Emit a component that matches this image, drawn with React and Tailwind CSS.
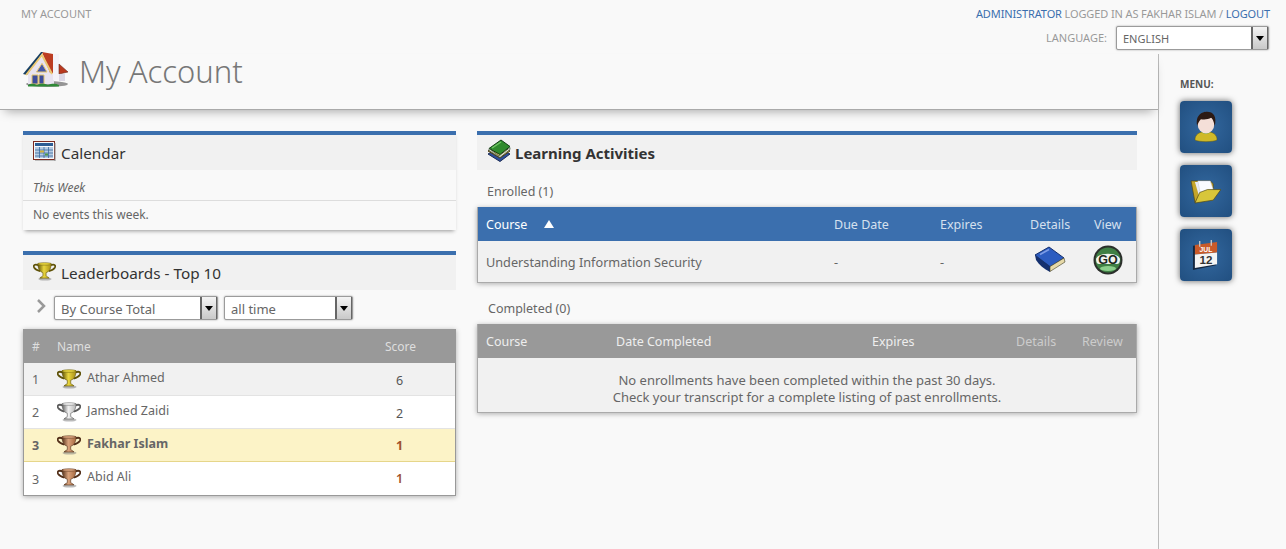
function Trophy({ id, light, mid, dark, className }) {
  return (
    <svg viewBox="0 0 24 20" className={className}>
      <defs>
        <linearGradient id={id} x1="0" y1="0" x2="1" y2="0">
          <stop offset="0" stopColor={dark} />
          <stop offset="0.45" stopColor={light} />
          <stop offset="1" stopColor={mid} />
        </linearGradient>
      </defs>
      <ellipse cx="12.5" cy="18" rx="7" ry="1.6" fill="#777" opacity="0.5" />
      <path d="M6 3.5C1 1.5 0 4 1.2 6c1.2 1.9 4 3 6.3 3.6M18 3.5c5-2 6 .5 4.8 2.5-1.2 1.9-4 3-6.3 3.6" fill="none" stroke={dark} strokeWidth="1.8" />
      <path d="M5 1.5h14c0 5-1.5 8.5-5.3 9.8v3c0 1 2.6 1.4 3.3 2.7H7c.7-1.3 3.3-1.7 3.3-2.7v-3C6.5 10 5 6.5 5 1.500z" fill={`url(#${id})`} stroke={dark} strokeWidth="0.6" />
      <ellipse cx="12" cy="2" rx="7" ry="1.3" fill={light} stroke={dark} strokeWidth="0.5" />
    </svg>
  );
}

function HouseIcon() {
  return (
    <svg viewBox="0 0 48 40" className="w-[48px] h-[40px] shrink-0 -mt-[3px]">
      <ellipse cx="25" cy="33" rx="21" ry="3" fill="#444" opacity="0.55" />
      <path d="M6 22 20 6l12 16v11H6z" fill="#e8e3f0" />
      <path d="M31 3h6v26h-6z" fill="#f4f2f8" />
      <path d="M37 13l9 8-9 2z" fill="#b9391f" stroke="#6d2a1c" strokeWidth="0.6" />
      <path d="M37 23h6v7h-6z" fill="#dcd8e6" />
      <path d="M20 1 31 3v19h-3z" fill="#bc3c22" />
      <path d="M1 23 19 1h2L5 24z" fill="#173f63" />
      <path d="M4 24 20 4l10 19" fill="none" stroke="#ecc873" strokeWidth="2" />
      <path d="M14.5 21 20 12.5l5 8.5z" fill="#4757a6" stroke="#e6c66c" />
      <path d="M10 24h6v9h-6zM17 24h5v9h-5z" fill="#3d4c9c" stroke="#e6c66c" />
      <path d="M6 34c3-2 6-1 9 0 4-2 8-1 11 0 3-1 7-2 11 0v1.5H6z" fill="#2f8a37" />
    </svg>
  );
}

function CalendarSmall() {
  return (
    <svg viewBox="0 0 23 20" className="w-[23px] h-[20px] shrink-0">
      <rect x="0.5" y="0.5" width="21" height="18" fill="#f6f8fb" stroke="#7c2b20" />
      <rect x="2" y="2" width="18" height="3" fill="#2c5c93" />
      <path d="M2 6h18v11H2z" fill="#b6cbe2" />
      <path d="M2 9h18M2 12h18M2 15h18M6.5 6v11M11 6v11M15.5 6v11" stroke="#3a6a9f" strokeWidth="0.8" />
      <rect x="7" y="9.5" width="4" height="2" fill="#d0b13c" />
      <rect x="12" y="12.5" width="3" height="2" fill="#4e9a4a" />
      <path d="M22 2v18H2" stroke="#888" fill="none" />
    </svg>
  );
}

function BooksIcon() {
  return (
    <svg viewBox="0 0 25 24" className="w-[25px] h-[24px] shrink-0">
      <path d="M1 15 12 9l11 6-10 7.5z" fill="#2c4f9a" stroke="#1c2c55" />
      <path d="M1 12 12 6l11 6-10 7z" fill="#d9b663" stroke="#4d3a17" />
      <path d="M2 9.5 14 1l9 6.5-10 8z" fill="#2f8a2d" stroke="#123f14" />
      <path d="M2 9.5 12 17l11-8.5v2L13 18.5 2 11.5z" fill="#e9e7d8" stroke="#1d3d1d" strokeWidth="0.6" />
      <path d="M5 9 14 3" stroke="#6fc564" strokeWidth="1.5" />
    </svg>
  );
}

function BlueBook() {
  return (
    <svg viewBox="0 0 32 28" className="w-[32px] h-[28px]">
      <path d="M1 9 15 1l15 11-14 9z" fill="#2c5cc0" stroke="#14306f" />
      <path d="M1 9 16 20v6C10 23 5 19 2 14z" fill="#14306f" />
      <path d="M16 20.5 30 12l1 4-15 9.5z" fill="#e6d9a8" stroke="#3d3a22" strokeWidth="0.6" />
      <path d="M6 8.5 15 3.5" stroke="#7d9ce6" strokeWidth="1.5" />
    </svg>
  );
}

function GoIcon() {
  return (
    <svg viewBox="0 0 30 30" className="w-[30px] h-[30px]">
      <circle cx="15" cy="15" r="14.5" fill="#2b2f2b" />
      <circle cx="15" cy="15" r="12.5" fill="#3f7f44" />
      <path d="M3 14C5 7 25 7 27 14c0 3-1 5-3 5H6c-2 0-3-2-3-5z" fill="#f2f4f0" />
      <text x="15" y="18.5" textAnchor="middle" fontSize="12.5" fontWeight="800" fontFamily="'Liberation Sans', sans-serif" fill="#1e2a1e">GO</text>
      <ellipse cx="15" cy="23.5" rx="8" ry="2.5" fill="#8ccf8c" />
    </svg>
  );
}

function PersonIcon() {
  return (
    <svg viewBox="0 0 26 34" className="w-[24px] h-[32px]">
      <path d="M1 31c0-6 5-9 12-9s12 3 12 9c-4 2.5-20 2.5-24 0z" fill="#cfb928" stroke="#5c5210" strokeWidth="0.5" />
      <path d="M8 22.5c2 2.5 8 2.5 10 0l-2-2h-6z" fill="#4f9a43" />
      <ellipse cx="13" cy="14" rx="9" ry="10" fill="#f4dfd8" />
      <path d="M3.5 16C1 4 9 .5 14 .5c7 0 11 5 8.5 15.5-1-4-2-8-4-9-3 2-8 2-11 1.5-1.500 1.5-3.500 5-4 7.500z" fill="#2c1a14" />
    </svg>
  );
}

function FolderIcon() {
  return (
    <svg viewBox="0 0 32 26" className="w-[31px] h-[25px] -ml-[2px]">
      <path d="M1 2h20l3 3v8L5 24z" fill="#c4a52a" stroke="#4f4412" strokeWidth="0.7" />
      <path d="M5 3h15l3 8-14 6z" fill="#e9ecf4" />
      <path d="M8 2h13l3 9-13 6z" fill="#fafbff" stroke="#bcc4d6" strokeWidth="0.5" />
      <path d="M5 25 10 14l8-3 14 0-8 11z" fill="#d8c63a" stroke="#4f4412" strokeWidth="0.7" />
    </svg>
  );
}

function CalendarBig() {
  return (
    <svg viewBox="0 0 28 32" className="w-[27px] h-[31px] -ml-[2px]">
      <path d="M1 6 25 3v23L1 31z" fill="#13263f" />
      <path d="M3 5 26 2v11L3 15z" fill="#c95a2a" />
      <path d="M3 15 26 13v12L3 29z" fill="#f4f4f4" />
      <path d="M8 1v6M20 0v6" stroke="#c9c9c9" strokeWidth="1.4" fill="none" />
      <text x="14.5" y="12" textAnchor="middle" fontSize="7" fontWeight="700" fontFamily="'Liberation Sans', sans-serif" fill="#fff">JUL</text>
      <text x="14.5" y="25" textAnchor="middle" fontSize="12" fontWeight="700" fontFamily="'Liberation Sans', sans-serif" fill="#333">12</text>
    </svg>
  );
}

function Select({ label, className, text = "text-[13px] pt-[4px]" }) {
  return (
    <div className={`flex h-[24px] bg-white rounded-[2px] border border-[#9b9b9b] shadow-[0_0_2px_rgba(0,0,0,0.35)] ${className}`}>
      <div className={`flex-1 pl-[6px] leading-[17px] text-[#666] ${text}`}>{label}</div>
      <div className="w-[17px] h-full border-l-2 border-r border-[#666] bg-gradient-to-b from-[#f4f4f4] to-[#c9c9c9] flex items-center justify-center">
        <div className="w-0 h-0 border-l-[4px] border-r-[4px] border-t-[5px] border-l-transparent border-r-transparent border-t-black" />
      </div>
    </div>
  );
}

function PanelHead({ icon, title, bold }) {
  return (
    <div className="h-[39px] border-t-4 border-[#3b6fae] bg-[#f1f1f1] flex items-center pl-[10px]">
      <div className="w-[28px] flex items-center -mt-[3px]">{icon}</div>
      <h2 className={`pt-[2px] text-[#333] ${bold ? "font-bold text-[15px]" : "text-[15.3px]"}`}>{title}</h2>
    </div>
  );
}

function MenuBtn({ children }) {
  return (
    <div className="w-[52px] h-[52px] rounded-[4px] bg-[radial-gradient(circle,#33689f,#214f80)] shadow-[0_0_6px_rgba(0,0,0,0.6)] flex items-center justify-center">
      {children}
    </div>
  );
}

const gold = { light: "#e9d63f", mid: "#a88f16", dark: "#5f5208" };
const silver = { light: "#f1f1f1", mid: "#b5b5b5", dark: "#5c5c5c" };
const bronze = { light: "#d9a27c", mid: "#a8693f", dark: "#53301a" };

const leaders = [
  { rank: 1, name: "Athar Ahmed", score: 6, medal: gold, rowClass: "bg-[#f1f1f1]", scoreClass: "text-[#555]" },
  { rank: 2, name: "Jamshed Zaidi", score: 2, medal: silver, rowClass: "bg-white", scoreClass: "text-[#555]" },
  { rank: 3, name: "Fakhar Islam", score: 1, medal: bronze, rowClass: "bg-[#fcf3c7] font-bold", scoreClass: "text-[#a0522d]" },
  { rank: 3, name: "Abid Ali", score: 1, medal: bronze, rowClass: "bg-white", scoreClass: "text-[#a0522d] font-semibold" },
];

export default function App() {
  return (
    <div className="h-[549px] w-[1286px] overflow-hidden bg-[#f9f9f9] flex flex-col text-[13px] text-[#666] font-['Noto_Sans',sans-serif]">
      <div className="h-[54px] flex justify-between pl-[21px] pr-[16px] text-[11px]">
        <div className="pt-[6px] text-[#999] leading-[16px]">MY ACCOUNT</div>
        <div className="flex flex-col items-end pt-[6px]">
          <div className="leading-[16px] text-[#999] tracking-[-0.12px]">
            <span className="text-[#3b6fae]">ADMINISTRATOR</span> LOGGED IN AS FAKHAR ISLAM / <span className="text-[#3b6fae]">LOGOUT</span>
          </div>
          <div className="flex items-center mt-[4px] mr-[1px] gap-[9px]">
            <span className="text-[#999]">LANGUAGE:</span>
            <Select label="ENGLISH" className="w-[153px]" text="text-[11px] pt-[3px]" />
          </div>
        </div>
      </div>

      <div className="flex-1 flex min-h-0">
        <main className="w-[1159px] border-r border-[#bbb] shrink-0">
          <header className="h-[56px] border-b border-[#aaa] shadow-[0_6px_10px_-5px_rgba(0,0,0,0.35)] flex items-start pl-[22px]">
            <HouseIcon />
            <h1 className="ml-[9px] -mt-[1px] text-[31px] leading-[36px] font-light text-[#777]">My Account</h1>
          </header>

          <div className="flex pl-[23px] pt-[21px] gap-[21px]">
            <section className="w-[433px] shrink-0">
              <div className="shadow-[0_3px_4px_-2px_rgba(0,0,0,0.4)]">
                <PanelHead icon={<CalendarSmall />} title="Calendar" />
                <div className="h-[31px] border-b border-[#ddd] pl-[10px] pt-[8px] text-[12px] leading-[20px] italic text-[#666]">This Week</div>
                <div className="h-[29px] pl-[10px] pt-[4px] leading-[20px] text-[12px]">No events this week.</div>
              </div>

              <div className="mt-[21px]">
                <PanelHead
                  icon={<Trophy id="t-head" {...gold} className="w-[23px] h-[19px]" />}
                  title="Leaderboards - Top 10"
                />
                <div className="h-[39px] flex items-start pt-[6px] pl-[13px]">
                  <svg viewBox="0 0 10 14" className="w-[10px] h-[14px] mt-[3px] mr-[8px]">
                    <path d="M2 1l6 6-6 6" fill="none" stroke="#999" strokeWidth="2.5" />
                  </svg>
                  <Select label="By Course Total" className="w-[164px]" />
                  <Select label="all time" className="w-[129px] ml-[6px]" />
                </div>
                <div className="border border-t-0 border-[#999] shadow-[0_1px_5px_rgba(0,0,0,0.3)]">
                  <div className="h-[34px] bg-[#999] text-[#dedede] flex items-center text-[12px]">
                    <span className="w-[33px] pl-[8px] pt-[2px]">#</span>
                    <span className="flex-1 pt-[2px]">Name</span>
                    <span className="w-[70px] pt-[2px]">Score</span>
                  </div>
                  {leaders.map((row, i) => (
                    <div key={i} className={`h-[33px] flex items-center border-b last:border-b-0 text-[12.5px] ${row.rowClass} ${i === 2 ? "border-[#e6d68a]" : "border-[#e3e3e3]"}`}>
                      <span className="w-[33px] pl-[8px] pt-[3px]">{row.rank}</span>
                      <Trophy id={`t-row-${i}`} {...row.medal} className="w-[24px] h-[20px] -mt-[1px]" />
                      <span className={`flex-1 pl-[6px] ${i === 3 ? "-mt-[3px]" : "-mt-[1px]"}`}>{row.name}</span>
                      <span className={`w-[59px] ${i < 2 ? "pt-[4px]" : "pt-[2px]"} ${row.scoreClass}`}>{row.score}</span>
                    </div>
                  ))}
                </div>
              </div>
            </section>

            <section className="w-[660px] shrink-0">
              <PanelHead icon={<BooksIcon />} title="Learning Activities" bold />
              <div className="h-[37px] pl-[10px] pt-[12px] leading-[20px] text-[12.5px]">Enrolled (1)</div>
              <div className="border border-t-0 border-[#aaa] shadow-[0_1px_5px_rgba(0,0,0,0.3)]">
                <div className="h-[34px] bg-[#3b6fae] text-[#d5e0ee] flex items-center text-[12.5px]">
                  <span className="w-[356px] pl-[8px] pt-[2px] flex items-center">
                    <span className="text-white">Course</span>
                    <span className="ml-[17px] -mt-[2px] w-0 h-0 border-l-[5px] border-r-[5px] border-b-[8px] border-l-transparent border-r-transparent border-b-white" />
                  </span>
                  <span className="w-[106px] pt-[2px]">Due Date</span>
                  <span className="w-[90px] pt-[2px]">Expires</span>
                  <span className="w-[64px] pt-[2px]">Details</span>
                  <span className="pt-[2px]">View</span>
                </div>
                <div className="h-[41px] bg-[#f1f1f1] flex items-center text-[12.7px]">
                  <span className="w-[356px] pl-[8px] pt-[2px]">Understanding Information Security</span>
                  <span className="w-[106px] pt-[2px]">-</span>
                  <span className="w-[90px] pt-[2px]">-</span>
                  <span className="w-[64px] pl-[4px] -mt-[3px]"><BlueBook /></span>
                  <span className="-ml-[1px] -mt-[3px]"><GoIcon /></span>
                </div>
              </div>

              <div className="h-[41px] pl-[11px] pt-[16px] leading-[20px] text-[12.5px]">Completed (0)</div>
              <div className="border border-t-0 border-[#aaa] shadow-[0_1px_5px_rgba(0,0,0,0.3)]">
                <div className="h-[34px] bg-[#999] text-[#eee] flex items-center text-[12.5px]">
                  <span className="w-[138px] pl-[8px] pt-[2px]">Course</span>
                  <span className="w-[256px] pt-[2px]">Date Completed</span>
                  <span className="w-[144px] pt-[2px]">Expires</span>
                  <span className="w-[66px] pt-[2px] text-[#ccc]">Details</span>
                  <span className="pt-[2px] text-[#ccc]">Review</span>
                </div>
                <div className="h-[54px] bg-[#f1f1f1] text-center text-[13px] leading-[17px] pt-[14px]">
                  <p>No enrollments have been completed within the past 30 days.</p>
                  <p>Check your transcript for a complete listing of past enrollments.</p>
                </div>
              </div>
            </section>
          </div>
        </main>

        <aside className="flex-1 pl-[21px] pt-[23px]">
          <div className="text-[10px] font-bold leading-[14px] text-[#555]">MENU:</div>
          <div className="mt-[10px] flex flex-col gap-[12px]">
            <MenuBtn><PersonIcon /></MenuBtn>
            <MenuBtn><FolderIcon /></MenuBtn>
            <MenuBtn><CalendarBig /></MenuBtn>
          </div>
        </aside>
      </div>
    </div>
  );
}
